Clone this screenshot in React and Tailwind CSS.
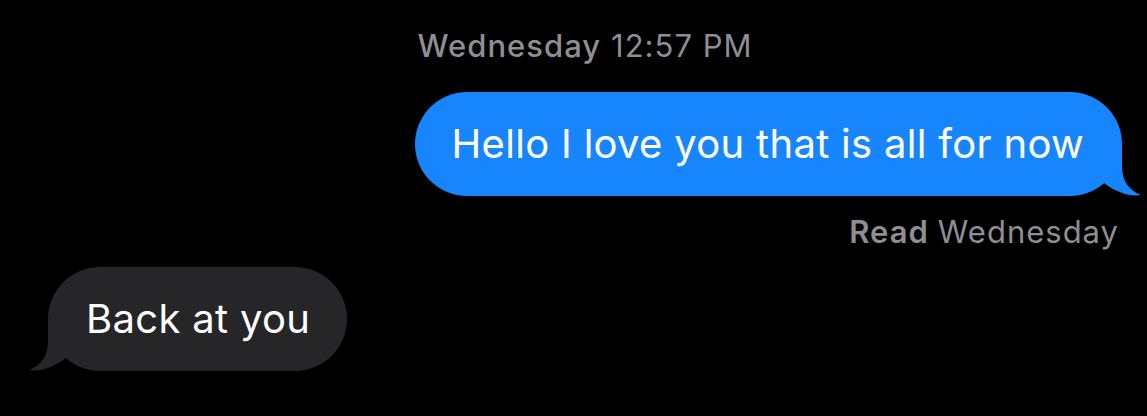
import React from 'react';

const font = { fontFamily: 'Inter, "Liberation Sans", sans-serif' };

// iMessage style tail, drawn for a right-side bubble; flipped for the left one
const Tail = ({ color, flip }) => (
  <svg
    width="40"
    height="50"
    viewBox="0 0 40 50"
    className={`absolute bottom-0 ${flip ? '-left-[20px] -scale-x-100' : '-right-[20px]'}`}
    aria-hidden="true"
  >
    <path d="M0 0 H20 V20 C20 34 26 44 39 49 C29 51 15 47 2 37 Z" fill={color} />
  </svg>
);

export default function App() {
  return (
    <div className="w-[1147px] h-[416px] bg-black overflow-hidden text-white" style={font}>
      {/* timestamp */}
      <div className="flex justify-center pl-[23px] pt-[28px] text-[31px] leading-[36px] tracking-[1px] text-[#8e8e93]">
        <span className="font-medium">Wednesday</span>
        <span className="ml-[10px]">12:57 PM</span>
      </div>

      {/* outgoing */}
      <div className="flex justify-end pr-[25px] mt-[28px]">
        <div className="relative">
          <div className="relative z-10 bg-[#1786fe] rounded-full h-[104px] pl-[37px] pr-[38px] flex items-center text-[40px] leading-[48px] tracking-[0.3px]">
            Hello I love you that is all for now
          </div>
          <Tail color="#1786fe" />
        </div>
      </div>

      <div className="flex justify-end pr-[28px] mt-[18px] text-[31px] leading-[36px] tracking-[1px] text-[#8e8e93]">
        <span className="font-semibold">Read</span>
        <span className="ml-[9px]">Wednesday</span>
      </div>

      {/* incoming */}
      <div className="flex justify-start pl-[48px] mt-[17px]">
        <div className="relative">
          <div className="relative z-10 bg-[#262628] rounded-full h-[104px] pl-[38px] pr-[37px] flex items-center text-[40px] leading-[48px] tracking-[0.3px]">
            Back at you
          </div>
          <Tail color="#262628" flip />
        </div>
      </div>
    </div>
  );
}
